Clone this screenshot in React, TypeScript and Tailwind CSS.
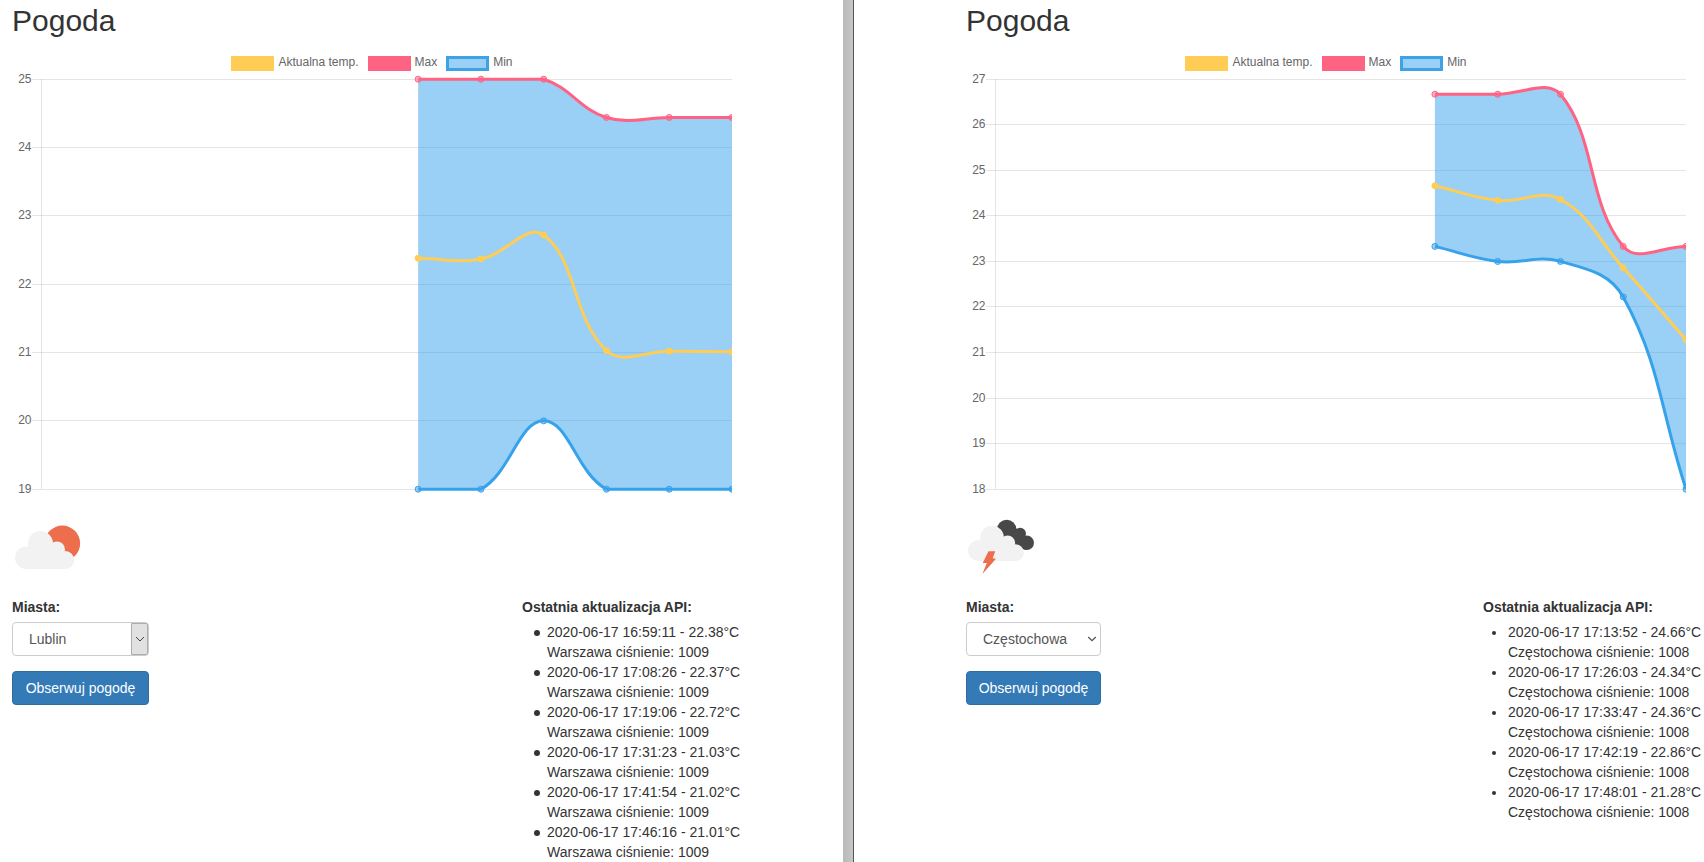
import { useId } from "react";

type Point = { x: number; y: number };

type Panel = {
  city: string;
  icon: "sun" | "storm";
  classicSelect: boolean;
  low: number;
  high: number;
  current: number[];
  max: number[];
  min: number[];
  readingCity: string;
  pressure: number;
  times: string[];
};

const LEFT: Panel = {
  city: "Lublin",
  icon: "sun",
  classicSelect: true,
  low: 19,
  high: 25,
  current: [22.38, 22.37, 22.72, 21.03, 21.02, 21.01],
  max: [25, 25, 25, 24.44, 24.44, 24.44],
  min: [19, 19, 20, 19, 19, 19],
  readingCity: "Warszawa",
  pressure: 1009,
  times: ["16:59:11", "17:08:26", "17:19:06", "17:31:23", "17:41:54", "17:46:16"],
};

const RIGHT: Panel = {
  city: "Częstochowa",
  icon: "storm",
  classicSelect: false,
  low: 18,
  high: 27,
  current: [24.66, 24.34, 24.36, 22.86, 21.28],
  max: [26.67, 26.67, 26.67, 23.33, 23.33],
  min: [23.33, 23, 23, 22.22, 18],
  readingCity: "Częstochowa",
  pressure: 1008,
  times: ["17:13:52", "17:26:03", "17:33:47", "17:42:19", "17:48:01"],
};

const AREA = { left: 29.5, right: 720, top: 8.2, bottom: 418.2 };
const SLOTS = 12;
const TENSION = 0.4;

function clampX(v: number) {
  return Math.max(AREA.left, Math.min(AREA.right, v));
}
function clampY(v: number) {
  return Math.max(AREA.top, Math.min(AREA.bottom, v));
}

/* Control points before and after every point of a smoothed line. */
function controls(points: Point[]) {
  return points.map((p, i) => {
    const prev = points[i - 1] ?? p;
    const next = points[i + 1] ?? p;
    const d0 = Math.hypot(p.x - prev.x, p.y - prev.y);
    const d1 = Math.hypot(next.x - p.x, next.y - p.y);
    const a = (TENSION * d0) / (d0 + d1);
    const b = (TENSION * d1) / (d0 + d1);
    const dx = next.x - prev.x;
    const dy = next.y - prev.y;
    return {
      before: { x: clampX(p.x - a * dx), y: clampY(p.y - a * dy) },
      after: { x: clampX(p.x + b * dx), y: clampY(p.y + b * dy) },
    };
  });
}

function curve(points: Point[], reverse = false) {
  const c = controls(points);
  const parts: string[] = [];
  if (!reverse) {
    for (let i = 1; i < points.length; i++) {
      parts.push(`C${c[i - 1].after.x} ${c[i - 1].after.y} ${c[i].before.x} ${c[i].before.y} ${points[i].x} ${points[i].y}`);
    }
  } else {
    for (let i = points.length - 2; i >= 0; i--) {
      parts.push(`C${c[i + 1].before.x} ${c[i + 1].before.y} ${c[i].after.x} ${c[i].after.y} ${points[i].x} ${points[i].y}`);
    }
  }
  return parts.join("");
}

function Chart({ panel }: { panel: Panel }) {
  const step = (AREA.right - AREA.left) / (SLOTS - 1);
  const yOf = (v: number) => AREA.top + ((panel.high - v) / (panel.high - panel.low)) * (AREA.bottom - AREA.top);
  const place = (values: number[]) =>
    values.map((v, i) => ({ x: AREA.left + (SLOTS - values.length + i) * step, y: yOf(v) }));

  const max = place(panel.max);
  const min = place(panel.min);
  const current = place(panel.current);
  const ticks = Array.from({ length: panel.high - panel.low + 1 }, (_, i) => panel.high - i);
  const lastMax = max[max.length - 1];

  const series = [
    { points: min, stroke: "#36a2eb", fill: "#36a2eb80" },
    { points: max, stroke: "#ff6384", fill: "#ff638480" },
    { points: current, stroke: "#ffcd56", fill: "#ffcd56" },
  ];

  return (
    <svg viewBox="0 0 720 425" className="block w-full" role="img" aria-label="Wykres temperatury">
      {ticks.map((t) => {
        const y = Math.floor(yOf(t)) + 0.5;
        return (
          <g key={t}>
            <line x1="20" x2="720" y1={y} y2={y} stroke="#000" strokeOpacity="0.1" />
            <text x="19.5" y={y + 3.5} textAnchor="end" fontSize="12" fill="#666">
              {t}
            </text>
          </g>
        );
      })}
      <line x1="29.5" x2="29.5" y1={AREA.top} y2={AREA.bottom} stroke="#000" strokeOpacity="0.1" />
      <path
        d={`M${min[0].x} ${min[0].y}${curve(min)}L${lastMax.x} ${lastMax.y}${curve(max, true)}Z`}
        fill="#36a2eb"
        fillOpacity="0.5"
      />
      {series.map((s) => (
        <g key={s.stroke} stroke={s.stroke}>
          <path d={`M${s.points[0].x} ${s.points[0].y}${curve(s.points)}`} fill="none" strokeWidth="3" />
          {s.points.map((p) => (
            <circle key={p.x} cx={p.x} cy={p.y} r="3" fill={s.fill} />
          ))}
        </g>
      ))}
    </svg>
  );
}

function Legend() {
  return (
    <div className="mt-[18px] flex h-4 items-center justify-center gap-[9px] text-xs leading-4 text-[#666]">
      <span className="flex items-center gap-1">
        <span className="h-[15px] w-[43px] bg-[#ffcd56]" />
        <span className="-mt-0.5">Aktualna temp.</span>
      </span>
      <span className="flex items-center gap-1">
        <span className="h-[15px] w-[43px] bg-[#ff6384]" />
        <span className="-mt-0.5">Max</span>
      </span>
      <span className="flex items-center gap-1">
        <span className="h-[15px] w-[43px] border-3 border-[#3ea2e5] bg-[#9ad0f5]" />
        <span className="-mt-0.5">Min</span>
      </span>
    </div>
  );
}

function CloudShape() {
  return (
    <g fill="#f2f2f2">
      <circle cx="14.3" cy="47.7" r="11.3" />
      <circle cx="28.5" cy="33.5" r="12.5" />
      <circle cx="45" cy="39.5" r="8" />
      <circle cx="53.3" cy="50" r="9" />
      <path d="M14.3 44 24 36 45 38 53.3 45V59H14.3Z" />
    </g>
  );
}

function SunIcon() {
  return (
    <svg viewBox="0 0 72 72" className="size-[72px]" role="img" aria-label="Częściowe zachmurzenie">
      <circle cx="50.3" cy="33.4" r="17.8" fill="#ec6e4c" />
      <CloudShape />
    </svg>
  );
}

function StormIcon() {
  return (
    <svg viewBox="0 0 72 72" className="size-[72px]" role="img" aria-label="Burza">
      <g fill="#484848">
        <circle cx="40.7" cy="19.3" r="9.6" />
        <circle cx="54.2" cy="23.6" r="5.8" />
        <circle cx="60.8" cy="32.8" r="7.2" />
        <path d="M40 14 54 20 61 32 60 40 48 36 36 24Z" />
      </g>
      <g transform="translate(-.8 -3.8) scale(.943 .93)">
        <CloudShape />
      </g>
      <path d="M22.5 41.3H29.2L26.7 48.3 30 48.7 16.4 64 20.8 53H16.7Z" fill="#ec6e4c" />
    </svg>
  );
}

function CitySelect({ id, panel }: { id: string; panel: Panel }) {
  return (
    <div className="relative">
      <select
        id={id}
        defaultValue={panel.city}
        className="block h-[34px] w-full appearance-none rounded border border-[#ccc] bg-white pr-6 pl-4 text-sm text-[#555]"
      >
        <option>{panel.city}</option>
      </select>
      {panel.classicSelect ? (
        <span className="pointer-events-none absolute inset-y-px right-px flex w-[17px] items-center justify-center rounded-r-xs border border-[#adadad] bg-[#e1e1e1]">
          <svg viewBox="0 0 10 6" className="w-2.5 fill-none stroke-[#444]">
            <path d="M1 1 5 5 9 1" />
          </svg>
        </span>
      ) : (
        <span className="pointer-events-none absolute inset-y-0 right-1 flex items-center">
          <svg viewBox="0 0 10 6" className="w-2.5 fill-none stroke-[#555] stroke-[1.3]">
            <path d="M1.2 1 5 4.6 8.8 1" />
          </svg>
        </span>
      )}
    </div>
  );
}

function Readings({ panel }: { panel: Panel }) {
  const item = panel.classicSelect
    ? "flex gap-[7px] before:mt-2 before:size-1.5 before:shrink-0 before:rounded-full before:bg-[#333]"
    : "flex gap-3 before:mt-[9px] before:size-1 before:shrink-0 before:rounded-full before:bg-[#333]";
  return (
    <section className="min-w-0 whitespace-nowrap">
      <h2 className="mb-[5px] font-bold">Ostatnia aktualizacja API:</h2>
      <ul className={panel.classicSelect ? "pl-3" : "pl-[9px]"}>
        {panel.times.map((time, i) => (
          <li key={time} className={item}>
            <span>
              2020-06-17 {time} - {panel.current[i].toFixed(2)}°C
              <br />
              {panel.readingCity} ciśnienie: {panel.pressure}
            </span>
          </li>
        ))}
      </ul>
    </section>
  );
}

function WeatherPanel({ panel, className, columns, formWidth }: { panel: Panel; className: string; columns: string; formWidth: string }) {
  const id = useId();
  return (
    <main className={`min-w-0 overflow-hidden pt-1 ${className}`}>
      <h1 className="text-3xl leading-[33px]">Pogoda</h1>
      <Legend />
      <Chart panel={panel} />
      <div className="mt-[14px] mb-[15px]">{panel.icon === "sun" ? <SunIcon /> : <StormIcon />}</div>
      <div className={`grid ${columns}`}>
        <form className={formWidth} onSubmit={(e) => e.preventDefault()}>
          <label htmlFor={id} className="mb-[5px] block font-bold">
            Miasta:
          </label>
          <CitySelect id={id} panel={panel} />
          <button
            type="submit"
            className="mt-[15px] h-[34px] w-full rounded border border-[#2e6da4] bg-[#337ab7] text-center whitespace-nowrap text-white"
          >
            Obserwuj pogodę
          </button>
        </form>
        <Readings panel={panel} />
      </div>
    </main>
  );
}

export default function App() {
  return (
    <div className="grid min-h-screen grid-cols-[843fr_11px_850fr] bg-white font-['Liberation_Sans',Arial,sans-serif] text-sm leading-5 text-[#333]">
      <WeatherPanel panel={LEFT} className="pr-[111px] pl-3" columns="grid-cols-[510fr_210fr]" formWidth="w-[137px]" />
      <div className="border-r border-[#555] bg-linear-to-r from-[#b9b9b9] to-[#c6c6c6]" />
      <WeatherPanel panel={RIGHT} className="pr-[18px] pl-28" columns="grid-cols-[517fr_203fr]" formWidth="w-[135px]" />
    </div>
  );
}
